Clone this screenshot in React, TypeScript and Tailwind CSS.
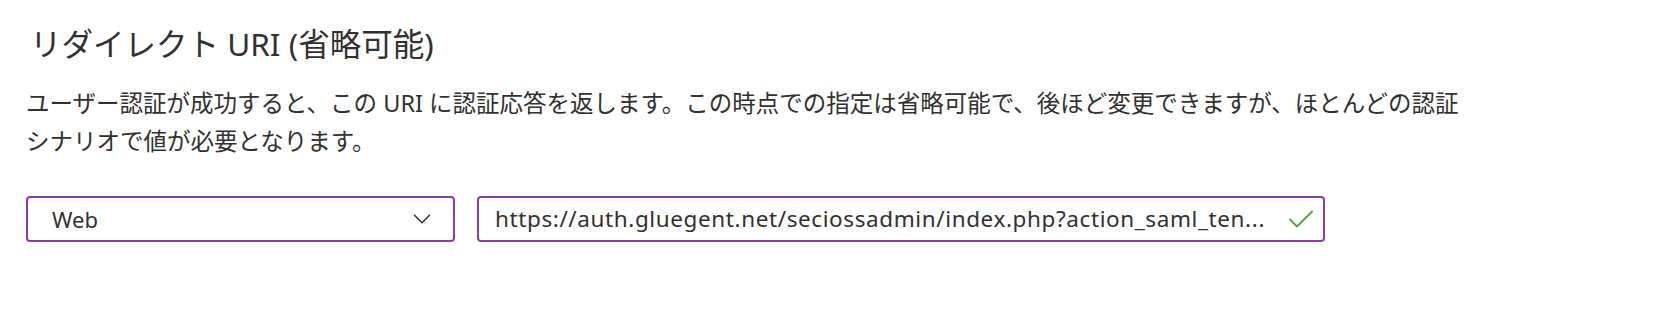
import { ChevronDown } from 'lucide-react';

const font = { fontFamily: '"Noto Sans", "Noto Sans CJK JP", sans-serif' };

export default function App() {
  return (
    <div className="w-[1676px] h-[316px] bg-white text-[#323130] pl-[26px] pt-6" style={font}>
      {/* 見出し */}
      <h2 className="text-[31.5px] leading-[40px] pl-[4px]">リダイレクト URI (省略可能)</h2>

      {/* 説明文 */}
      <p className="mt-5 w-[1455px] text-[23.5px] leading-[38px]">
        ユーザー認証が成功すると、この URI に認証応答を返します。この時点での指定は省略可能で、後ほど変更できますが、ほとんどの認証シナリオで値が必要となります。
      </p>

      {/* プラットフォーム + URI */}
      <div className="mt-9 flex gap-[22px]">
        <button className="w-[429px] h-[46px] flex items-center justify-between border-2 border-[#8a3ea6] rounded-[4px] pl-[24px] pr-[16px] text-[22px] text-[#323130]">
          <span>Web</span>
          <ChevronDown className="w-[30px] h-[30px] text-[#323130]" strokeWidth={1.2} />
        </button>
        <div className="w-[848px] h-[46px] flex items-center border-2 border-[#8a3ea6] rounded-[4px] pl-[16px] pr-[10px] gap-3">
          <span className="flex-1 whitespace-nowrap text-[22.5px] tracking-[0.6px]">
            https://auth.gluegent.net/seciossadmin/index.php?action_saml_ten...
          </span>
          <svg width="24" height="18" viewBox="0 0 24 18" fill="none" className="shrink-0">
            <path d="M1 9.5 L8 16.5 L23 1.5" stroke="#5ea530" strokeWidth="2" strokeLinecap="round" strokeLinejoin="round" />
          </svg>
        </div>
      </div>
    </div>
  );
}
